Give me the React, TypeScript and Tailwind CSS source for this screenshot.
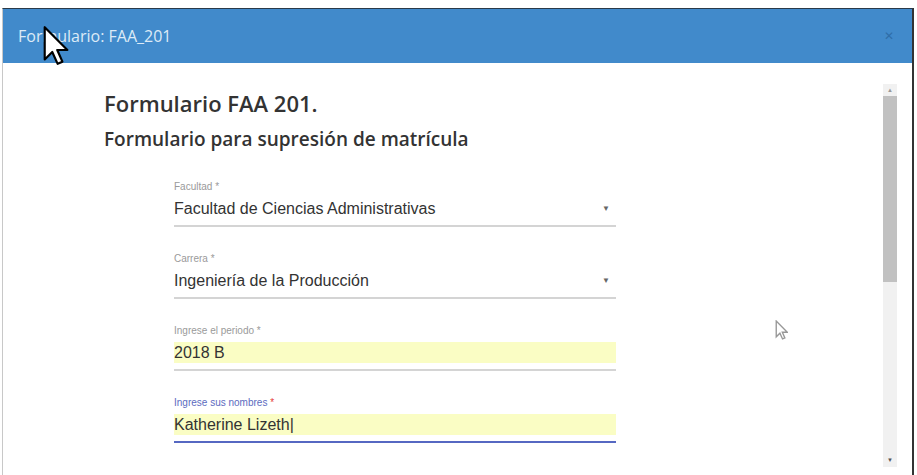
import React from "react";

type FieldProps = {
  label: string;
  value: string;
  select?: boolean;
  filled?: boolean;
  focused?: boolean;
};

const Field = ({ label, value, select, filled, focused }: FieldProps) => (
  <div className="w-[442px]">
    <div
      className={`text-[10px] leading-[12px] ${focused ? "text-[#5c6bc0]" : "text-[#9a9a9a]"}`}
    >
      {label} <span className={focused ? "text-[#e53935]" : ""}>*</span>
    </div>
    <div
      className={`mt-[5px] flex h-[21px] items-center text-[16px] ${
        filled ? "bg-[#fafdc4]" : ""
      } text-[#333]`}
    >
      <span className="flex-1">{value}</span>
      {select && <span className="mr-[6px] text-[8px] text-[#666]">▼</span>}
    </div>
    <div
      className={`mt-[6px] ${focused ? "h-[2px] bg-[#5668c2]" : "h-[2px] bg-[#d4d4d4]"}`}
    />
  </div>
);

const Arrow = ({ className }: { className: string }) => (
  <svg viewBox="0 0 12 19" className={className}>
    <path
      d="M1 1 L1 16 L4.5 12.5 L7 18 L9.2 17 L6.8 11.6 L11.5 11.6 Z"
      fill="white"
      stroke="black"
      strokeWidth="1"
      strokeLinejoin="round"
    />
  </svg>
);

export default function App() {
  return (
    <div
      className="relative h-[475px] w-[917px] overflow-hidden bg-white"
      style={{ fontFamily: "'Liberation Sans', Arial, sans-serif" }}
    >
      <div className="ml-[2px] mt-[8px] flex h-[467px] w-[912px] flex-col border-l border-r-2 border-t border-l-[#c8c8c8] border-r-[#333] border-t-[#2a3a4a]">
        {/* header */}
        <div className="flex h-[54px] items-center justify-between bg-[#418acb] pl-[15px] pr-[18px]">
          <span
            className="text-[16px] text-[#dceaf7]"
            style={{ fontFamily: "'Open Sans', sans-serif" }}
          >
            Formulario: FAA_201
          </span>
          <span className="text-[12px] text-[#2f6ea8]">✕</span>
        </div>

        {/* body */}
        <div className="flex flex-1">
          <div className="flex-1 pl-[101px] pt-[25px]">
            <h1
              className="text-[22px] font-semibold leading-[30px] text-[#333]"
              style={{ fontFamily: "'Open Sans', sans-serif" }}
            >
              Formulario FAA 201.
            </h1>
            <h2
              className="mt-[8px] text-[19px] font-semibold leading-[26px] text-[#333]"
              style={{ fontFamily: "'Open Sans', sans-serif" }}
            >
              Formulario para supresión de matrícula
            </h2>
            <div className="ml-[70px] mt-[29px] flex flex-col gap-[26px]">
              <Field label="Facultad" value="Facultad de Ciencias Administrativas" select />
              <Field label="Carrera" value="Ingeniería de la Producción" select />
              <Field label="Ingrese el periodo" value="2018 B" filled />
              <Field label="Ingrese sus nombres" value="Katherine Lizeth|" filled focused />
            </div>
          </div>

          {/* scrollbar */}
          <div className="mr-[15px] mt-[21px] mb-[8px] flex w-[14px] flex-col items-center bg-[#f1f1f1]">
            <span className="mt-[2px] text-[6px] leading-[8px] text-[#999]">▲</span>
            <div className="mt-[2px] h-[186px] w-full bg-[#c1c1c1]" />
            <div className="flex-1" />
            <span className="mb-[3px] text-[6px] leading-[8px] text-[#555]">▼</span>
          </div>
        </div>
      </div>

      {/* mouse pointers */}
      <Arrow className="absolute left-[42px] top-[25px] h-[41px] w-[27px]" />
      <svg viewBox="0 0 12 19" className="absolute left-[775px] top-[320px] h-[20px] w-[13px] opacity-60">
        <path
          d="M1 1 L1 16 L4.5 12.5 L7 18 L9.2 17 L6.8 11.6 L11.5 11.6 Z"
          fill="white"
          stroke="#555"
          strokeWidth="1.3"
        />
      </svg>
    </div>
  );
}
